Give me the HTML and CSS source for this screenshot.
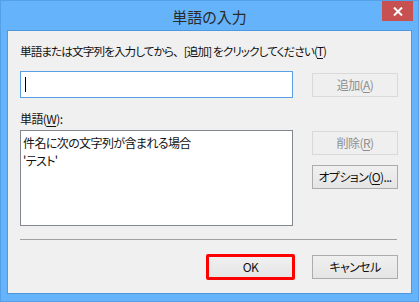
FILE: index.html
```html
<!DOCTYPE html>
<html lang="ja">
<head>
<meta charset="utf-8">
<link rel="stylesheet" href="styles.css">
</head>
<body>
<div class="window">
  <div class="titlebar">
    <span class="spacer"></span>
    <span class="title">単語の入力</span>
    <span class="controls">
      <span class="close">
        <svg width="10" height="9" viewBox="0 0 10 9"><path d="M1 0.5 L9 8.5 M9 0.5 L1 8.5" stroke="#fff" stroke-width="2"/></svg>
      </span>
    </span>
  </div>
  <div class="client">
    <div class="prompt">単語または文字列を入力してから<span class="fw">、</span>[追加] をクリックしてください(<u>T</u>)</div>
    <div class="row row-input">
      <div class="textbox"><span class="caret"></span></div>
      <div class="btn disabled btn-add">追加(<u>A</u>)</div>
    </div>
    <div class="words-label">単語(<u>W</u>):</div>
    <div class="row row-list">
      <div class="listbox">
        <div class="item">件名に次の文字列が含まれる場合</div>
        <div class="item">'テスト'</div>
      </div>
      <div class="side">
        <div class="btn disabled btn-del">削除(<u>R</u>)</div>
        <div class="btn btn-opt">オプション(<u>O</u>)...</div>
      </div>
    </div>
    <div class="separator"></div>
    <div class="footer">
      <div class="btn btn-ok">OK</div>
      <div class="btn btn-cancel">キャンセル</div>
    </div>
  </div>
</div>
</body>
</html>
```

FILE: styles.css
```css
* { box-sizing: border-box; }
html, body { margin: 0; padding: 0; }
body {
  font-family: "Noto Sans CJK JP", "Noto Sans", sans-serif;
  font-feature-settings: "palt";
  font-size: 12px;
  letter-spacing: -0.6px;
  color: #111;
  background: #64b3fb;
}
.window {
  width: 419px;
  height: 302px;
  background: #64b3fb;
  border: 1px solid #559fe6;
  padding: 0 6px 7px 6px;
  display: flex;
  flex-direction: column;
}
.titlebar {
  height: 29px;
  display: grid;
  grid-template-columns: 1fr auto 1fr;
  align-items: start;
}
.title {
  font-size: 15px;
  line-height: 20px;
  margin-top: 6px;
  color: #2b2b2b;
  letter-spacing: 0;
  white-space: nowrap;
}
.controls { display: flex; justify-content: flex-end; }
.close {
  width: 31px;
  height: 20px;
  background: #c75050;
  display: flex;
  align-items: center;
  justify-content: center;
  margin-right: -1px;
}
.client {
  flex: 1;
  background: #f0f0f0;
  border: 1px solid #4f98df;
  padding: 0 13px 0 12px;
  display: flex;
  flex-direction: column;
}
.prompt {
  margin-top: 11px;
  height: 18px;
  line-height: 18px;
  font-size: 11.6px;
  letter-spacing: -0.9px;
  white-space: nowrap;
}
.fw { font-feature-settings: normal; }
u { text-decoration-thickness: 1px; text-underline-offset: 2px; }
.row { display: flex; align-items: flex-start; }
.row-input { margin-top: 11px; }
.textbox {
  width: 273px;
  height: 27px;
  background: #fff;
  border: 1px solid #5a9fe3;
  padding: 5px 0 0 4px;
}
.caret {
  display: block;
  width: 1px;
  height: 15px;
  background: #000;
}
.btn {
  width: 86px;
  height: 24px;
  border: 1px solid #acacac;
  background: linear-gradient(#f0f0f0, #e5e5e5);
  display: flex;
  align-items: center;
  justify-content: center;
  line-height: 16px;
  white-space: nowrap;
}
.btn.disabled {
  background: #efefef;
  border-color: #d9d9d9;
  color: #8e8e8e;
}
.btn-add { margin-left: 19px; margin-top: 2px; }
.words-label {
  margin-top: 13px;
  height: 16px;
  line-height: 16px;
}
.row-list { margin-top: 3px; }
.listbox {
  width: 273px;
  height: 96px;
  background: #fff;
  border: 1px solid #828790;
  padding: 3px 0 0 2px;
}
.item { line-height: 18px; white-space: nowrap; }
.side {
  margin-left: 19px;
  display: flex;
  flex-direction: column;
  gap: 10px;
  margin-top: 1px;
}
.separator {
  margin-top: 13px;
  height: 1px;
  background: #a0a0a0;
  margin-right: 1px;
}
.footer {
  margin-top: 14px;
  display: flex;
  justify-content: flex-end;
  align-items: flex-start;
  gap: 17px;
}
.btn-ok {
  width: 89px;
  height: 26px;
  border: 3px solid #ff0000;
  border-radius: 2px;
}
.btn-cancel { margin-top: 1px; }
```
